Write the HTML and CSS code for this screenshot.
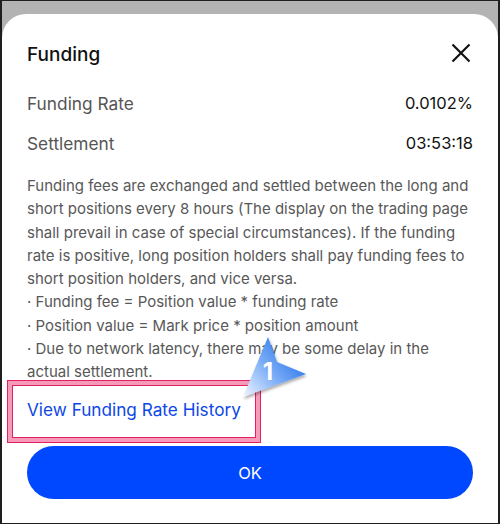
FILE: index.html
```html
<!DOCTYPE html>
<html>

<head>
  <meta charset="utf-8" />
  <meta name="viewport" content="width=device-width, initial-scale=1" />
  <title>Funding</title>
  <link rel="stylesheet" href="styles.css">
</head>

<body>
  <div class="frame">
    <div class="sheet">
      <div class="sheet-head">
        <h2>Funding</h2>
        <button class="close" aria-label="Close">
          <svg width="24" height="24" viewBox="0 0 24 24">
            <path d="M3.5 3.5 L20.5 20.5 M20.5 3.5 L3.5 20.5" stroke="#111" stroke-width="2.2" fill="none" />
          </svg>
        </button>
      </div>

      <div class="row">
        <span class="label">Funding Rate</span>
        <span class="value">0.0102%</span>
      </div>
      <div class="row">
        <span class="label">Settlement</span>
        <span class="value">03:53:18</span>
      </div>

      <p class="desc">
        Funding fees are exchanged and settled between the long and short positions every 8 hours (The display on the trading page shall prevail in case of special circumstances). If the funding rate is positive, long position holders shall pay funding fees to short position holders, and vice versa.<br>
        · Funding fee = Position value * funding rate<br>
        · Position value = Mark price * position amount<br>
        · Due to network latency, there may be some delay in the actual settlement.
      </p>

      <a class="history" href="#">View Funding Rate History</a>

      <button class="ok">OK</button>
    </div>

    <!-- annotation overlay -->
    <div class="mark"></div>
    <svg class="callout" width="80" height="76" viewBox="0 0 80 76">
      <defs>
        <linearGradient id="cg" x1="0" y1="1" x2="1" y2="0.2">
          <stop offset="0" stop-color="#f2f6ff" />
          <stop offset="0.45" stop-color="#7fb0f7" />
          <stop offset="1" stop-color="#1565e8" />
        </linearGradient>
        <filter id="sh" x="-30%" y="-30%" width="160%" height="160%">
          <feDropShadow dx="1" dy="2" stdDeviation="1.5" flood-color="#000" flood-opacity="0.35" />
        </filter>
      </defs>
      <path d="M30 5 L39 30 L68 42 L5 65 Z" fill="url(#cg)" filter="url(#sh)" />
      <text x="30" y="48" text-anchor="middle" class="callout-num">1</text>
    </svg>
  </div>
</body>

</html>
```

FILE: styles.css
```css
html,
body {
  margin: 0;
  padding: 0;
}

body {
  font-family: Inter, "Noto Sans", Arial, sans-serif;
  color: #111;
}

.frame {
  position: relative;
  width: 500px;
  height: 524px;
  box-sizing: border-box;
  border: 1px solid #1e1e1e;
  border-left-width: 2px;
  border-right-width: 2px;
  background: #b3b3b3;
  padding-top: 13px;
  overflow: hidden;
}

.sheet {
  height: 100%;
  box-sizing: border-box;
  background: #ffffff;
  border-radius: 24px 24px 0 0;
  padding: 29px 25px 0;
  display: flex;
  flex-direction: column;
}

.sheet-head {
  display: flex;
  align-items: center;
  justify-content: space-between;
  height: 24px;
  margin-bottom: 16px;
}

.sheet-head h2 {
  margin: 0;
  font-size: 19px;
  font-weight: 500;
  line-height: 24px;
  color: #111;
}

.close {
  border: none;
  background: none;
  padding: 0;
  width: 24px;
  height: 24px;
  margin-top: -4px;
  cursor: pointer;
}

.close svg {
  display: block;
}

.row {
  display: flex;
  justify-content: space-between;
  align-items: center;
  height: 40px;
}

.label {
  font-size: 17.3px;
  color: #555;
}

.value {
  font-size: 16.5px;
  color: #111;
}

.desc {
  margin: 11px 0 0;
  font-size: 15px;
  line-height: 23.25px;
  color: #585858;
}

.history {
  display: block;
  margin-top: 15px;
  line-height: 24px;
  font-size: 17.2px;
  color: #0d47e6;
  text-decoration: none;
}

.ok {
  margin-top: 24px;
  height: 53px;
  border: none;
  border-radius: 27px;
  background: #0048ff;
  color: #ffffff;
  font-family: inherit;
  font-size: 16.5px;
  cursor: pointer;
}

.mark {
  position: absolute;
  left: 5px;
  top: 379px;
  width: 254px;
  height: 63px;
  box-sizing: border-box;
  border: 1px solid #e3205f;
  box-shadow: inset 0 0 0 4px #f59abb, inset 0 0 0 5px #e3205f;
  pointer-events: none;
}

.callout {
  position: absolute;
  left: 236px;
  top: 331px;
  overflow: visible;
}

.callout-num {
  font-family: Inter, Arial, sans-serif;
  font-weight: 700;
  font-size: 24px;
  fill: #ffffff;
}
```
